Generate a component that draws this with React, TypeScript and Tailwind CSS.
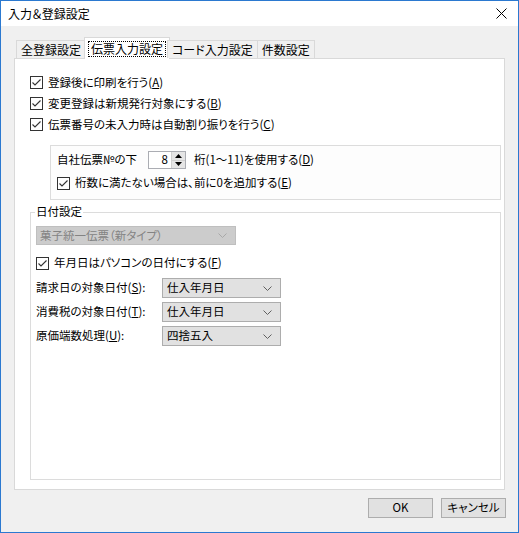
import React from 'react';

const Check = () => (
  <span className="w-[13px] h-[13px] border border-[#333333] bg-white flex items-center justify-center shrink-0">
    <svg width="11" height="11" viewBox="0 0 11 11">
      <path d="M1.5 5.5 L4 8 L9.5 2.5" fill="none" stroke="#333333" strokeWidth="1.1" />
    </svg>
  </span>
);

const Chevron = ({ color = '#606060' }: { color?: string }) => (
  <svg width="9" height="5" viewBox="0 0 9 5" className="shrink-0">
    <path d="M0.5 0.5 L4.5 4.5 L8.5 0.5" fill="none" stroke={color} strokeWidth="1" />
  </svg>
);

const CheckRow = ({ children, className = '' }: { children: React.ReactNode; className?: string }) => (
  <div className={`flex items-center gap-[5px] ${className}`}>
    <Check />
    <span>{children}</span>
  </div>
);

const Combo = ({ value }: { value: string }) => (
  <div className="w-[119px] h-[20px] border border-[#adadad] bg-[#e1e1e1] flex items-center justify-between pl-[4px] pr-[8px]">
    <span>{value}</span>
    <Chevron />
  </div>
);

const tabs = ['全登録設定', '伝票入力設定', 'コード入力設定', '件数設定'];

const App = () => {
  return (
    <div className="w-[519px] h-[533px] border border-[#2b79d0] bg-[#f0f0f0] flex flex-col text-[11.5px] leading-none text-black font-['Noto_Sans_CJK_JP',sans-serif] [font-feature-settings:'palt']">
      {/* title bar */}
      <div className="h-[25px] bg-white flex items-center justify-between pl-[7px] pr-[11px] shrink-0 text-[12px]">
        <span>入力＆登録設定</span>
        <svg width="11" height="11" viewBox="0 0 11 11">
          <path d="M0.5 0.5 L10.5 10.5 M10.5 0.5 L0.5 10.5" stroke="#000" strokeWidth="1" />
        </svg>
      </div>

      {/* tabs */}
      <div className="mt-[11px] flex items-end h-[21px] pl-[15px] relative z-10 text-[12px]">
        {tabs.map((t, i) =>
          i === 1 ? (
            <div key={t} className="h-[22px] -mx-[2px] -mb-[1px] px-[3px] bg-white border-x border-t border-[#d9d9d9] flex items-center">
              <span className="border border-dotted border-black px-[2px] py-[1px]">{t}</span>
            </div>
          ) : (
            <div key={t} className="h-[18px] px-[4px] border border-[#d9d9d9] border-b-0 bg-[#f0f0f0] flex items-center -ml-px first:ml-0">
              {t}
            </div>
          )
        )}
      </div>

      {/* tab panel */}
      <div className="mx-[13px] h-[432px] bg-white border border-[#d9d9d9] flex flex-col pt-[13px]">
        <div className="pl-[15px] flex flex-col">
          <CheckRow className="h-[21px]">登録後に印刷を行う(<u>A</u>)</CheckRow>
          <CheckRow className="h-[21px]">変更登録は新規発行対象にする(<u>B</u>)</CheckRow>
          <CheckRow className="h-[21px]">伝票番号の未入力時は自動割り振りを行う(<u>C</u>)</CheckRow>
        </div>

        {/* inner box */}
        <div className="ml-[35px] mt-[10px] w-[451px] h-[55px] border border-[#dcdcdc] bg-[#fdfdfd] flex flex-col pt-[5px] pl-[6px]">
          <div className="flex items-center h-[18px]">
            <span className="w-[91px]">自社伝票№の下</span>
            <div className="w-[38px] h-[18px] border border-[#abadb3] bg-white flex">
              <span className="flex-1 flex items-center justify-end pr-[3px]">8</span>
              <div className="w-[14px] flex flex-col border-l border-[#d0d0d0]">
                <div className="flex-1 bg-[#e5e5e5] flex items-center justify-center border-b border-[#d0d0d0]">
                  <svg width="7" height="4" viewBox="0 0 7 4"><path d="M0 4 L3.5 0 L7 4 Z" fill="#000" /></svg>
                </div>
                <div className="flex-1 bg-[#e5e5e5] flex items-center justify-center">
                  <svg width="7" height="4" viewBox="0 0 7 4"><path d="M0 0 L3.5 4 L7 0 Z" fill="#000" /></svg>
                </div>
              </div>
            </div>
            <span className="ml-[8px]">桁(1〜11)を使用する(<u>D</u>)</span>
          </div>
          <CheckRow className="h-[20px] mt-[4px]">桁数に満たない場合は、前に0を追加する(<u>E</u>)</CheckRow>
        </div>

        {/* date group */}
        <div className="relative ml-[15px] mt-[12px] w-[471px] h-[268px] border border-[#dcdcdc] flex flex-col pl-[5px] pt-[13px]">
          <span className="absolute -top-[7px] left-[4px] bg-white px-[1px]">日付設定</span>
          <div className="w-[200px] h-[19px] border border-[#bfbfbf] bg-[#cccccc] text-[#838383] flex items-center justify-between pl-[3px] pr-[8px]">
            <span>菓子統一伝票（新タイプ）</span>
            <Chevron color="#a8a8a8" />
          </div>
          <CheckRow className="h-[20px] mt-[8px]">年月日はパソコンの日付にする(<u>F</u>)</CheckRow>
          <div className="flex flex-col gap-[4px] mt-[5px]">
            <div className="flex items-center">
              <span className="w-[126px]">請求日の対象日付(<u>S</u>):</span>
              <Combo value="仕入年月日" />
            </div>
            <div className="flex items-center">
              <span className="w-[126px]">消費税の対象日付(<u>T</u>):</span>
              <Combo value="仕入年月日" />
            </div>
            <div className="flex items-center">
              <span className="w-[126px]">原価端数処理(<u>U</u>):</span>
              <Combo value="四捨五入" />
            </div>
          </div>
        </div>
      </div>

      {/* buttons */}
      <div className="flex justify-end gap-[8px] mt-[8px] pr-[12px]">
        <button className="w-[65px] h-[20px] border border-[#adadad] bg-[#e1e1e1] flex items-center justify-center">OK</button>
        <button className="w-[65px] h-[20px] border border-[#adadad] bg-[#e1e1e1] flex items-center justify-center">キャンセル</button>
      </div>
    </div>
  );
};

export default App;
